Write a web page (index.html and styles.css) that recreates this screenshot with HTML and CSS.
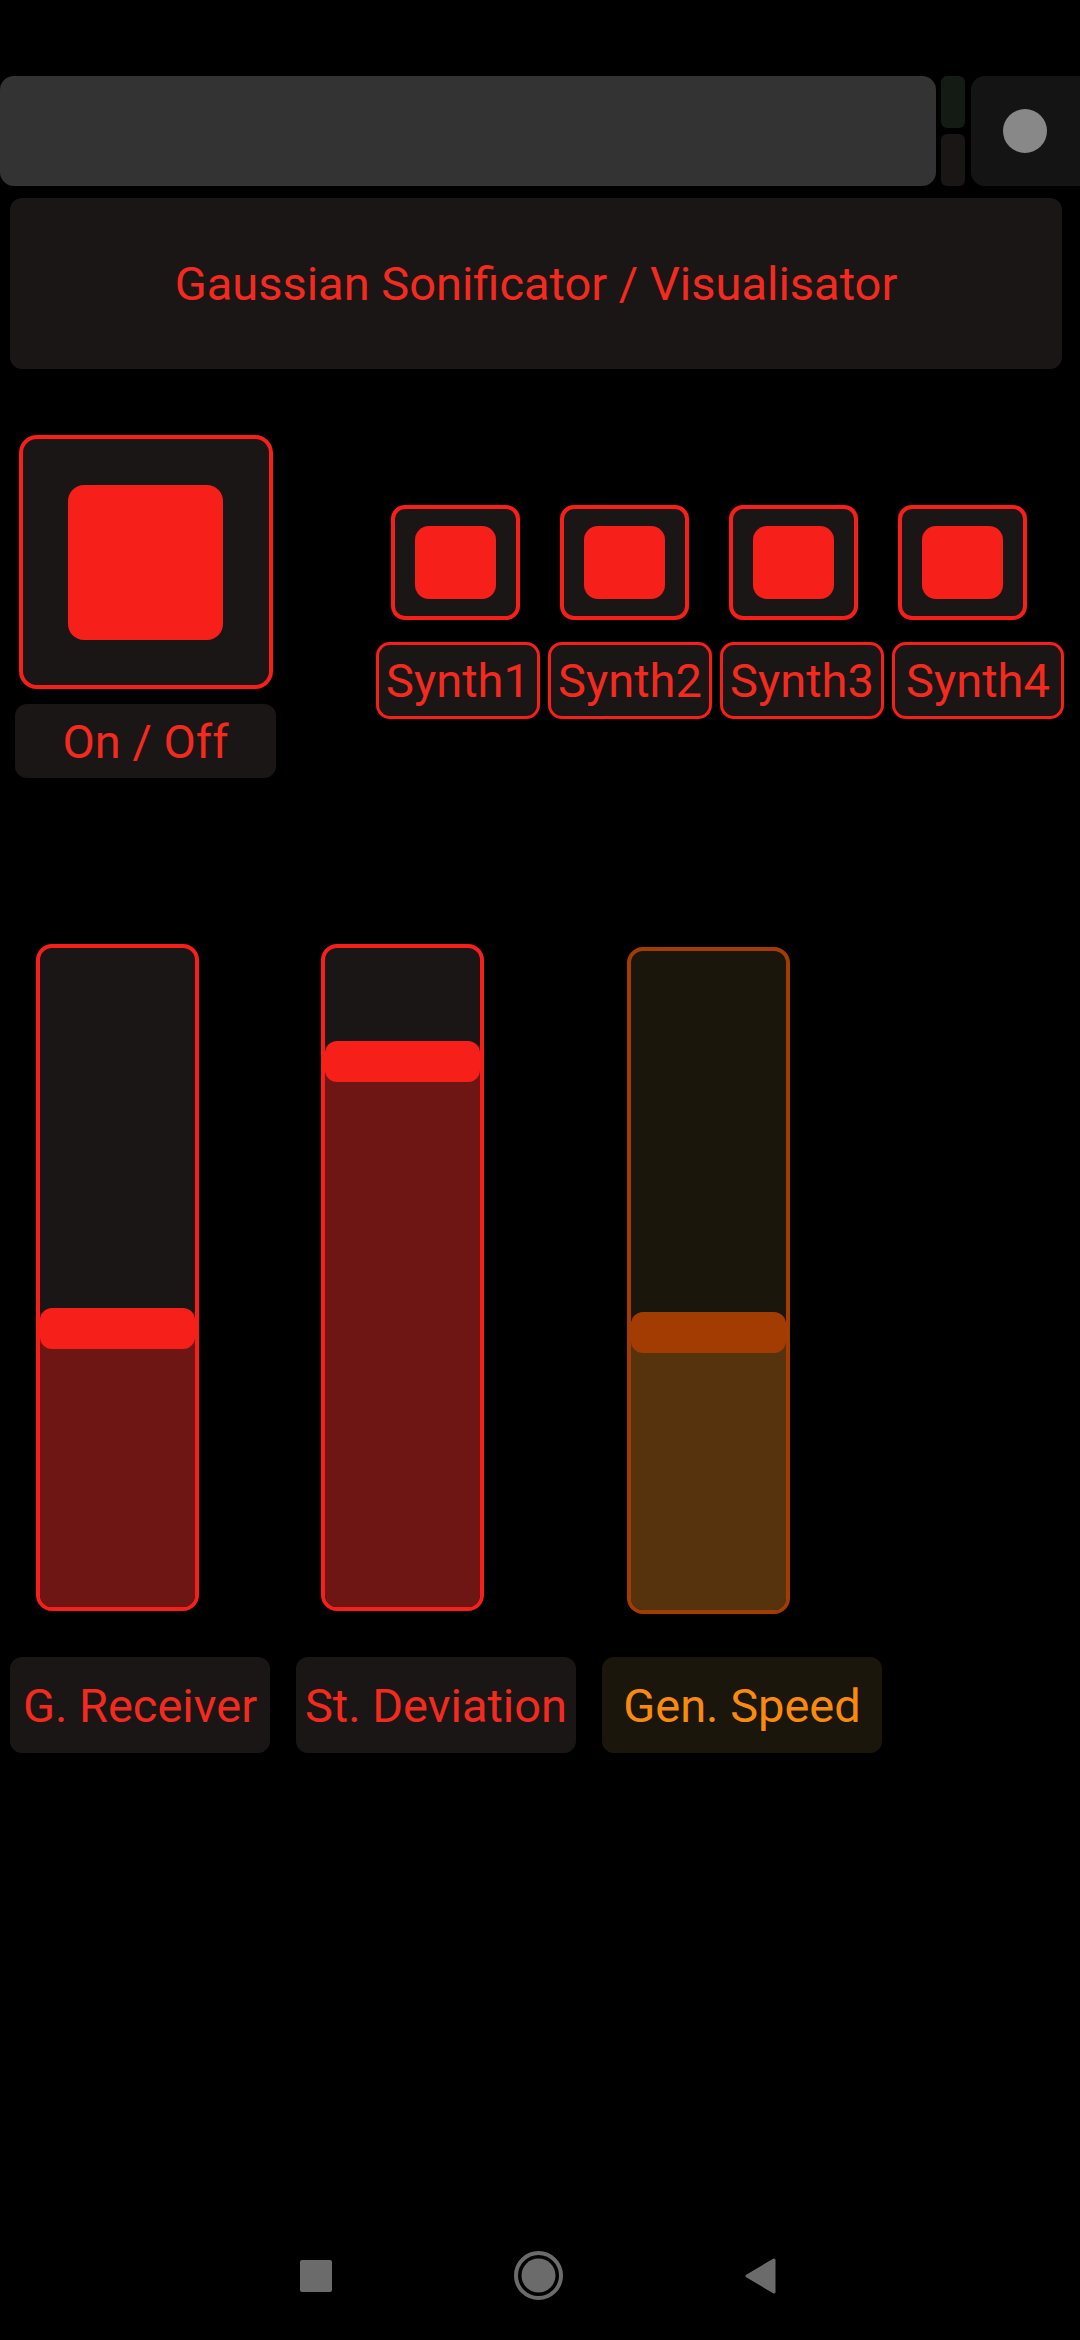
FILE: index.html
```html
<!DOCTYPE html>
<html>
<head>
    <title>Gaussian Sonificator</title>
    <link rel="stylesheet" href="styles.css">
</head>
<body>
    <div id="screen">
        <div class="topbar">
            <div class="seekbar"></div>
            <div class="meters">
                <div class="meter meter-top"></div>
                <div class="meter meter-bottom"></div>
            </div>
            <div class="recbox"><div class="recdot"></div></div>
        </div>

        <div class="title">Gaussian Sonificator / Visualisator</div>

        <div class="controls">
            <div class="power">
                <div class="toggle toggle-big"><div class="led led-big"></div></div>
                <div class="label power-label">On / Off</div>
            </div>
            <div class="synths">
                <div class="synth-toggles">
                    <div class="toggle toggle-small"><div class="led led-small"></div></div>
                    <div class="toggle toggle-small"><div class="led led-small"></div></div>
                    <div class="toggle toggle-small"><div class="led led-small"></div></div>
                    <div class="toggle toggle-small"><div class="led led-small"></div></div>
                </div>
                <div class="synth-labels">
                    <div class="synth-label">Synth1</div>
                    <div class="synth-label">Synth2</div>
                    <div class="synth-label">Synth3</div>
                    <div class="synth-label synth-label-wide">Synth4</div>
                </div>
            </div>
        </div>

        <div class="sliders">
            <div class="slider slider-red">
                <div class="fill" style="height: 279px"><div class="thumb"></div></div>
            </div>
            <div class="slider slider-red">
                <div class="fill" style="height: 546px"><div class="thumb"></div></div>
            </div>
            <div class="slider slider-orange">
                <div class="fill" style="height: 278px"><div class="thumb"></div></div>
            </div>
        </div>

        <div class="slider-labels">
            <div class="label slider-label">G. Receiver</div>
            <div class="label slider-label">St. Deviation</div>
            <div class="label slider-label label-orange">Gen. Speed</div>
        </div>

        <div class="navbar">
            <svg class="nav-recent" width="32" height="32" viewBox="0 0 32 32">
                <rect x="0" y="0" width="32" height="32" rx="2" fill="#6b6b6b"/>
            </svg>
            <svg class="nav-home" width="49" height="49" viewBox="0 0 49 49">
                <circle cx="24.5" cy="24.5" r="22.5" fill="none" stroke="#6b6b6b" stroke-width="4"/>
                <circle cx="24.5" cy="24.5" r="17" fill="#6b6b6b"/>
            </svg>
            <svg class="nav-back" width="31" height="36" viewBox="0 0 31 36">
                <path d="M29 2 L2 18 L29 34 Z" fill="#6b6b6b" stroke="#6b6b6b" stroke-width="3" stroke-linejoin="round"/>
            </svg>
        </div>
    </div>
</body>
</html>
```

FILE: styles.css
```css
body {
    margin: 0;
    background: #000;
    font-family: Roboto, "Noto Sans", sans-serif;
}
#screen {
    width: 1080px;
    height: 2340px;
    overflow: hidden;
}

/* top transport bar */
.topbar {
    display: flex;
    height: 110px;
    margin-top: 76px;
}
.seekbar {
    width: 936px;
    background: #333333;
    border-radius: 14px;
}
.meters {
    display: flex;
    flex-direction: column;
    gap: 6px;
    width: 24px;
    margin-left: 5px;
}
.meter {
    flex: 1;
    border-radius: 6px;
}
.meter-top {
    background: #141a14;
}
.meter-bottom {
    background: #1a1616;
}
.recbox {
    flex: 1;
    margin-left: 6px;
    background: #141414;
    border-radius: 14px 0 0 14px;
    display: flex;
    align-items: center;
    padding-left: 32px;
}
.recdot {
    width: 44px;
    height: 44px;
    border-radius: 50%;
    background: #888888;
}

.title {
    margin: 12px 18px 0 10px;
    height: 171px;
    background: #1a1616;
    border-radius: 12px;
    color: #f52a1f;
    font-size: 47px;
    display: flex;
    align-items: center;
    justify-content: center;
}

/* toggles */
.controls {
    display: flex;
    margin-top: 66px;
}
.power {
    display: flex;
    flex-direction: column;
    align-items: center;
    width: 261px;
    margin-left: 15px;
}
.toggle {
    box-sizing: border-box;
    background: #1a1616;
    border: 4px solid #f61f1a;
    display: flex;
    align-items: center;
    justify-content: center;
}
.toggle-big {
    width: 254px;
    height: 254px;
    border-radius: 18px;
}
.led {
    background: #f61f1a;
}
.led-big {
    width: 155px;
    height: 155px;
    border-radius: 16px;
}
.label {
    background: #1a1616;
    color: #f52a1f;
    font-size: 47px;
    border-radius: 12px;
    display: flex;
    align-items: center;
    justify-content: center;
}
.power-label {
    width: 261px;
    height: 74px;
    margin-top: 15px;
}
.synths {
    margin-left: 100px;
    margin-top: 70px;
}
.synth-toggles {
    display: flex;
    gap: 40px;
    padding-left: 15px;
}
.toggle-small {
    width: 129px;
    height: 115px;
    border-radius: 14px;
}
.led-small {
    width: 81px;
    height: 73px;
    border-radius: 14px;
}
.synth-labels {
    display: flex;
    gap: 8px;
    margin-top: 22px;
}
.synth-label {
    box-sizing: border-box;
    width: 164px;
    height: 77px;
    background: #1a1616;
    border: 3px solid #f61f1a;
    border-radius: 14px;
    color: #f52a1f;
    font-size: 47px;
    display: flex;
    align-items: center;
    justify-content: center;
    white-space: nowrap;
}
.synth-label-wide {
    width: 172px;
}

/* vertical faders */
.sliders {
    display: flex;
    align-items: flex-start;
    margin-top: 166px;
    padding-left: 36px;
}
.slider {
    box-sizing: border-box;
    width: 163px;
    height: 667px;
    border: 4px solid #f61f1a;
    border-radius: 16px;
    background: #1a1616;
    display: flex;
    flex-direction: column;
    justify-content: flex-end;
}
.slider + .slider {
    margin-left: 122px;
}
.slider-orange {
    margin-top: 3px;
    border-color: #a33c02;
    background: #1a160c;
}
.slider + .slider-orange {
    margin-left: 143px;
}
.fill {
    background: #6e1614;
    border-radius: 0 0 12px 12px;
}
.slider-orange .fill {
    background: #56330d;
}
.thumb {
    height: 41px;
    margin-top: -20px;
    border-radius: 12px;
    background: #f61f1a;
}
.slider-orange .thumb {
    background: #a33c02;
}

.slider-labels {
    display: flex;
    gap: 26px;
    margin-top: 43px;
    padding-left: 10px;
}
.slider-label {
    height: 96px;
    width: 260px;
}
.slider-label + .slider-label {
    width: 280px;
}
.label-orange {
    background: #1a160c;
    color: #f98a0c;
}

/* android nav */
.navbar {
    display: flex;
    align-items: center;
    gap: 182px;
    height: 49px;
    margin-top: 498px;
    padding-left: 300px;
}
```
